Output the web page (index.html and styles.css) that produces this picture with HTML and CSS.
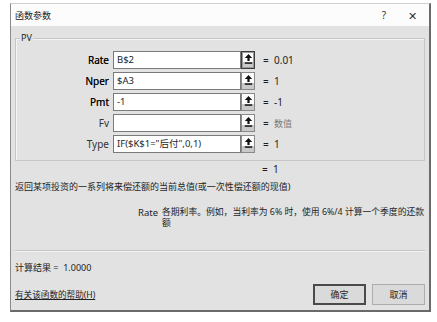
FILE: index.html
```html
<!DOCTYPE html>
<html lang="zh-CN">
<head>
<meta charset="utf-8">
<title>函数参数</title>
<link rel="stylesheet" href="styles.css">
</head>
<body>
<div class="dialog">
  <div class="titlebar">
    <span class="title">函数参数</span>
    <span class="tb-btns"><span class="help">?</span><span class="close">✕</span></span>
  </div>
  <div class="content">
    <div class="group">
      <span class="legend">PV</span>
      <div class="row">
        <span class="label req">Rate</span>
        <span class="input">B$2</span>
        <span class="pick focus"><svg width="9" height="10" viewBox="0 0 9 10"><path d="M4.5 0 L8.2 4 H5.6 V7 H3.4 V4 H0.8 Z" fill="#111"/><rect x="0.8" y="8.3" width="7.4" height="1.5" fill="#111"/></svg></span>
        <span class="eq">=</span><span class="val">0.01</span>
      </div>
      <div class="row">
        <span class="label req">Nper</span>
        <span class="input">$A3</span>
        <span class="pick"><svg width="9" height="10" viewBox="0 0 9 10"><path d="M4.5 0 L8.2 4 H5.6 V7 H3.4 V4 H0.8 Z" fill="#111"/><rect x="0.8" y="8.3" width="7.4" height="1.5" fill="#111"/></svg></span>
        <span class="eq">=</span><span class="val">1</span>
      </div>
      <div class="row">
        <span class="label req">Pmt</span>
        <span class="input">-1</span>
        <span class="pick"><svg width="9" height="10" viewBox="0 0 9 10"><path d="M4.5 0 L8.2 4 H5.6 V7 H3.4 V4 H0.8 Z" fill="#111"/><rect x="0.8" y="8.3" width="7.4" height="1.5" fill="#111"/></svg></span>
        <span class="eq">=</span><span class="val">-1</span>
      </div>
      <div class="row">
        <span class="label">Fv</span>
        <span class="input"></span>
        <span class="pick"><svg width="9" height="10" viewBox="0 0 9 10"><path d="M4.5 0 L8.2 4 H5.6 V7 H3.4 V4 H0.8 Z" fill="#111"/><rect x="0.8" y="8.3" width="7.4" height="1.5" fill="#111"/></svg></span>
        <span class="eq">=</span><span class="val muted">数值</span>
      </div>
      <div class="row">
        <span class="label">Type</span>
        <span class="input">IF($K$1="后付",0,1)</span>
        <span class="pick"><svg width="9" height="10" viewBox="0 0 9 10"><path d="M4.5 0 L8.2 4 H5.6 V7 H3.4 V4 H0.8 Z" fill="#111"/><rect x="0.8" y="8.3" width="7.4" height="1.5" fill="#111"/></svg></span>
        <span class="eq">=</span><span class="val">1</span>
      </div>
    </div>
    <div class="result"><span class="eq">=</span><span class="val">1</span></div>
    <div class="desc">返回某项投资的一系列将来偿还额的当前总值(或一次性偿还额的现值)</div>
    <div class="param">
      <span class="pname">Rate</span>
      <span class="ptext">各期利率。例如，当利率为 6% 时，使用 6%/4 计算一个季度的还款额</span>
    </div>
    <div class="sep"></div>
    <div class="calc">计算结果 =&nbsp;&nbsp;1.0000</div>
    <div class="footer">
      <a class="helplink" href="#">有关该函数的帮助(H)</a>
      <div class="buttons">
        <span class="btn default">确定</span>
        <span class="btn">取消</span>
      </div>
    </div>
  </div>
</div>
</body>
</html>
```
FILE: styles.css
```css
* { box-sizing: border-box; }
html, body { margin: 0; background: #fff; }
body {
  padding: 3px 0 0 10px;
  font-family: "Noto Sans", "Noto Sans CJK SC", sans-serif;
  font-size: 9px;
  color: #1e1e1e;
}
.dialog {
  width: 421px;
  border: 1px solid #8a8a8a;
  border-top-color: #cfcfcf;
  border-right: 2px solid #6a6a6a;
  border-bottom: 2px solid #6a6a6a;
  background: #e2e2e2;
}
.titlebar {
  height: 22px;
  background: #fcfcfc;
  display: flex;
  align-items: center;
  justify-content: space-between;
  padding: 0 12px 0 4px;
}
.title { font-size: 9px; color: #222; }
.tb-btns { display: flex; align-items: center; gap: 22px; }
.help { font-size: 10px; color: #333; }
.close { font-size: 11px; color: #333; }
.content { padding: 12px 4px 5px 4px; }
.group {
  position: relative;
  border: 1px solid #c6c6c6;
  box-shadow: inset 1px 1px 0 #f4f4f4;
  padding: 12px 0 7px 0;
  display: flex;
  flex-direction: column;
  gap: 3px;
}
.legend {
  position: absolute;
  top: -7px;
  left: 4px;
  padding: 0 1px;
  background: #e2e2e2;
  font-size: 9px;
  line-height: 12px;
}
.row {
  display: flex;
  align-items: center;
  height: 18px;
}
.label {
  width: 97px;
  text-align: right;
  font-size: 10px;
  padding-right: 4px;
  color: #333;
}
.label.req { color: #000; text-shadow: 0 0 0.3px #444; }
.input {
  width: 128px;
  height: 18px;
  background: #fff;
  border: 1px solid #7a7a7a;
  padding: 0 3px;
  font-size: 9.5px;
  line-height: 16px;
  white-space: nowrap;
  overflow: hidden;
}
.pick {
  width: 14px;
  height: 18px;
  border: 1px solid #8a8a8a;
  background: linear-gradient(#fcfcfc 0, #fcfcfc 62%, #c9c9c9 62%);
  display: flex;
  justify-content: center;
  padding-top: 2px;
}
.pick.focus { border: 1px solid #3c3c3c; box-shadow: inset 0 0 0 1px #9a9a9a; }
.eq { margin-left: 8px; width: 11px; font-size: 10px; }
.val { font-size: 10px; color: #222; }
.val.muted { color: #7a7a7a; font-size: 9px; }
.result {
  display: flex;
  align-items: center;
  height: 12px;
  margin-top: 2px;
  padding-left: 247px;
}
.result .eq { margin-left: 0; }
.desc {
  margin-top: 6px;
  line-height: 12px;
}
.param {
  display: flex;
  margin-top: 14px;
  padding-left: 123px;
  line-height: 11px;
}
.pname { flex: none; width: 24px; font-size: 9.5px; }
.ptext { flex: 1; min-width: 0; font-size: 8.8px; }
.sep {
  margin-top: 21px;
  height: 2px;
  border-top: 1px solid #c6c6c6;
  border-bottom: 1px solid #f2f2f2;
}
.calc {
  margin-top: 10px;
  line-height: 12px;
}
.footer {
  margin-top: 10px;
  display: flex;
  justify-content: space-between;
  align-items: center;
}
.helplink {
  color: #222;
  text-decoration: underline;
  font-size: 8.6px;
}
.buttons { display: flex; gap: 6px; }
.btn {
  width: 53px;
  height: 21px;
  display: flex;
  align-items: center;
  justify-content: center;
  background: #dadada;
  border: 1px solid #adadad;
}
.btn.default { border: 2px solid #4a4a4a; }
```
